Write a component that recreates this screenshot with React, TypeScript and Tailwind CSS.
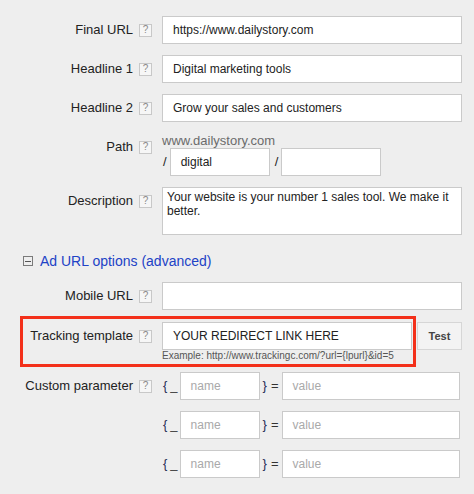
import React from "react";

function Help() {
  return (
    <span className="flex h-[13px] w-[13px] items-center justify-center border border-[#c8c8c8] bg-[#f6f6f6] text-[10px] leading-none text-[#8a8a8a]">
      ?
    </span>
  );
}

function Label({ text, w = "w-[152px]" }: { text: string; w?: string }) {
  return (
    <div className={`flex h-[28px] shrink-0 items-center justify-end gap-[6px] ${w}`}>
      <span className="text-[13px] text-[#222]">{text}</span>
      <Help />
    </div>
  );
}

function Field({ value, placeholder, w = "w-[300px]" }: { value?: string; placeholder?: string; w?: string }) {
  return (
    <div className={`flex h-[28px] items-center border border-[#cacaca] bg-white pl-[10px] text-[12px] ${w}`}>
      {value ? (
        <span className="text-[#222]">{value}</span>
      ) : (
        <span className="text-[#a9a9a9]">{placeholder}</span>
      )}
    </div>
  );
}

function ParamRow({ first }: { first?: boolean }) {
  return (
    <div className="flex">
      {first ? <Label text="Custom parameter" /> : <div className="w-[152px] shrink-0" />}
      <div className="ml-[10px] flex h-[28px] items-center">
        <span className="ml-[1px] text-[13px] text-[#1f2a55]">{"{"}</span>
        <span className="ml-[3px] text-[13px] text-[#333]">_</span>
        <div className="ml-[2px]">
          <Field placeholder="name" w="w-[80px]" />
        </div>
        <span className="ml-[3px] text-[13px] text-[#1f2a55]">{"}"}</span>
        <span className="ml-[4px] text-[13px] text-[#333]">=</span>
        <div className="ml-[3px]">
          <Field placeholder="value" w="w-[178px]" />
        </div>
      </div>
    </div>
  );
}

export default function App() {
  return (
    <main className="h-[494px] w-[474px] overflow-hidden bg-[#eeeeee] pt-[16px] font-['Liberation_Sans',Arial,sans-serif]">
      <div className="flex">
        <Label text="Final URL" />
        <div className="ml-[10px]">
          <Field value="https://www.dailystory.com" />
        </div>
      </div>
      <div className="mt-[11px] flex">
        <Label text="Headline 1" />
        <div className="ml-[10px]">
          <Field value="Digital marketing tools" />
        </div>
      </div>
      <div className="mt-[11px] flex">
        <Label text="Headline 2" />
        <div className="ml-[10px]">
          <Field value="Grow your sales and customers" />
        </div>
      </div>

      <div className="mt-[11px] flex">
        <Label text="Path" />
        <div className="ml-[10px]">
          <div className="text-[13px] leading-[15px] text-[#6b6b6b]">www.dailystory.com</div>
          <div className="flex items-center">
            <span className="ml-[1px] text-[13px] text-[#222]">/</span>
            <div className="ml-[3px]">
              <Field value="digital" w="w-[100px]" />
            </div>
            <span className="ml-[5px] text-[13px] text-[#222]">/</span>
            <div className="ml-[3px]">
              <Field w="w-[100px]" />
            </div>
          </div>
        </div>
      </div>

      <div className="mt-[11px] flex">
        <Label text="Description" />
        <div className="ml-[10px] h-[48px] w-[300px] border border-[#cacaca] bg-white px-[4px] pt-[2px] text-[12px] leading-[14px] text-[#222]">
          Your website is your number 1 sales tool. We make it better.
        </div>
      </div>

      <div className="mt-[17px] flex h-[18px] items-center pl-[23px]">
        <span className="flex h-[10px] w-[10px] items-center justify-center border border-[#7a7a7a]">
          <span className="h-px w-[6px] bg-[#555]" />
        </span>
        <span className="ml-[7px] text-[14px] text-[#2142c6]">Ad URL options (advanced)</span>
      </div>

      <div className="mt-[12px] flex">
        <Label text="Mobile URL" />
        <div className="ml-[10px]">
          <Field />
        </div>
      </div>

      <div className="mt-[6px] flex items-start">
        <div className="ml-[20px] flex w-[396px] border-[3px] border-[#f3301a] pt-[3px] pb-[2px]">
          <Label text="Tracking template" w="w-[129px]" />
          <div className="ml-[10px]">
            <Field value="YOUR REDIRECT LINK HERE" w="w-[250px]" />
            <div className="text-[10px] leading-[12px] text-[#555]">
              Example: http://www.trackingc.com/?url={"{lpurl}"}&amp;id=5
            </div>
          </div>
        </div>
        <button className="ml-px mt-[6px] flex h-[28px] w-[45px] items-center justify-center border border-[#d6d6d6] bg-[#f3f3f3] text-[11px] font-bold text-[#444]">
          Test
        </button>
      </div>

      <div className="mt-[5px] flex flex-col gap-[11px]">
        <ParamRow first />
        <ParamRow />
        <ParamRow />
      </div>
    </main>
  );
}
